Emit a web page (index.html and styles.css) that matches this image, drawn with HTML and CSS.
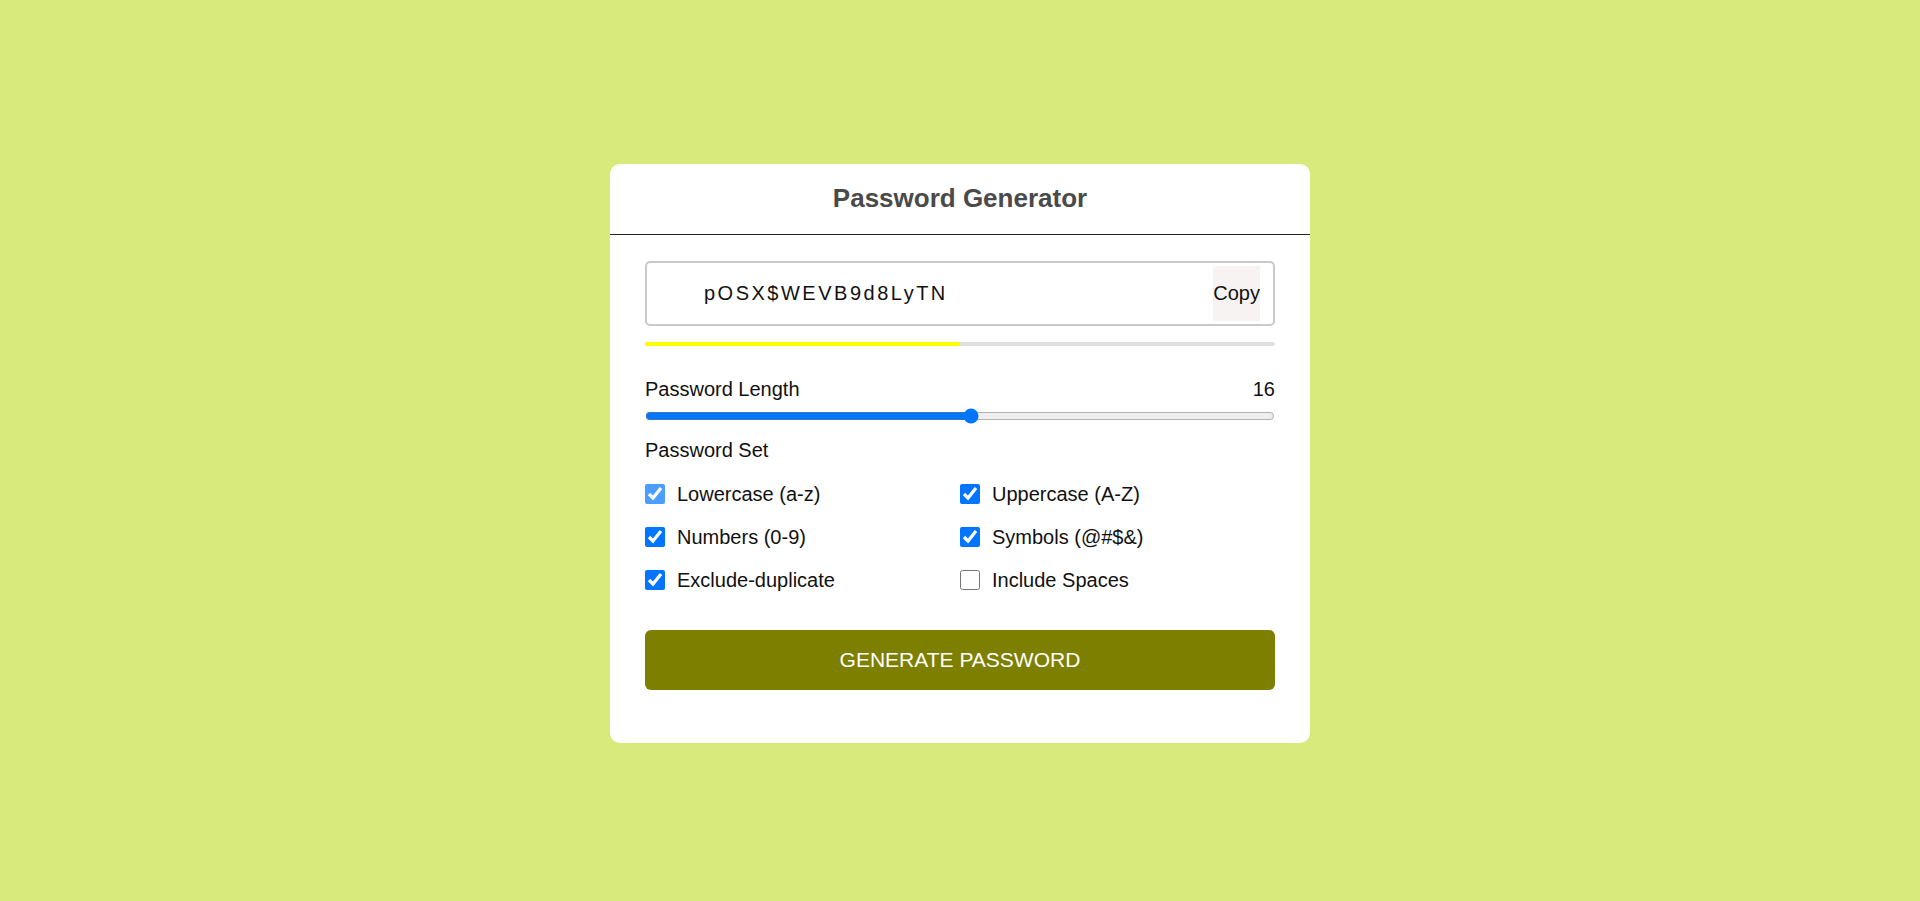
FILE: index.html
```html
<!DOCTYPE html>
<html lang="en">
<head>
<meta charset="utf-8">
<title>Password Generator</title>
<link rel="stylesheet" href="styles.css">
</head>
<body>
<main class="card">
  <header class="card-header">
    <h1 class="title">Password Generator</h1>
  </header>
  <section class="card-body">
    <div class="display">
      <span class="pass">pOSX$WEVB9d8LyTN</span>
      <button class="copy" type="button">Copy</button>
    </div>
    <div class="strength"><div class="strength-fill" style="width:50%"></div></div>
    <div class="length-row">
      <span>Password Length</span>
      <span>16</span>
    </div>
    <input class="slider" type="range" min="1" max="30" value="16">
    <div class="set-label">Password Set</div>
    <div class="options">
      <label class="opt"><input class="dim" type="checkbox" checked><span>Lowercase (a-z)</span></label>
      <label class="opt"><input type="checkbox" checked><span>Uppercase (A-Z)</span></label>
      <label class="opt"><input type="checkbox" checked><span>Numbers (0-9)</span></label>
      <label class="opt"><input type="checkbox" checked><span>Symbols (@#$&amp;)</span></label>
      <label class="opt"><input type="checkbox" checked><span>Exclude-duplicate</span></label>
      <label class="opt"><input type="checkbox"><span>Include Spaces</span></label>
    </div>
    <button class="generate" type="button">GENERATE PASSWORD</button>
  </section>
</main>
</body>
</html>
```
FILE: styles.css
```css
* { box-sizing: border-box; }
html, body { margin: 0; padding: 0; }
body {
  background: #d8ea7c;
  font-family: "Liberation Sans", Arial, sans-serif;
  color: #111;
  min-height: 100vh;
  display: flex;
  align-items: center;
  justify-content: center;
  padding-top: 5px;
}
.card {
  width: 700px;
  background: #fff;
  border-radius: 10px;
}
.card-header {
  height: 71px;
  border-bottom: 1px solid #222;
  display: flex;
  align-items: center;
  justify-content: center;
}
.title {
  margin: 0;
  font-size: 26px;
  font-weight: bold;
  color: #4a4a4a;
}
.card-body {
  padding: 26px 35px 53px;
  display: flex;
  flex-direction: column;
}
.display {
  height: 65px;
  border: 2px solid #c9c9c9;
  border-radius: 5px;
  display: flex;
  align-items: center;
  padding: 0 13px 0 57px;
}
.pass {
  font-size: 20px;
  letter-spacing: 2.5px;
  color: #111;
}
.copy {
  margin-left: auto;
  height: 55px;
  padding: 0;
  border: none;
  background: #f7f3f3;
  font-family: "Liberation Sans", Arial, sans-serif;
  font-size: 20px;
  color: #111;
}
.strength {
  margin-top: 16px;
  height: 4px;
  background: #dedede;
  border-radius: 2px;
  overflow: hidden;
}
.strength-fill {
  height: 100%;
  background: #ffff00;
}
.length-row {
  margin-top: 31px;
  display: flex;
  justify-content: space-between;
  font-size: 20px;
  line-height: 24px;
}
.slider {
  margin: 7px 0 0;
  width: 100%;
  height: 16px;
}
.set-label {
  margin-top: 14px;
  font-size: 20px;
  line-height: 24px;
}
.options {
  margin-top: 20px;
  display: grid;
  grid-template-columns: 1fr 1fr;
  row-gap: 19px;
}
.opt {
  display: flex;
  align-items: center;
  gap: 12px;
  font-size: 20px;
  line-height: 24px;
}
.opt input {
  margin: 0;
  width: 20px;
  height: 20px;
}
.opt input.dim {
  opacity: 0.7;
}
.generate {
  margin-top: 38px;
  height: 60px;
  border: none;
  border-radius: 6px;
  background: #7d7f00;
  color: #fff;
  font-family: "Liberation Sans", Arial, sans-serif;
  font-size: 21px;
}
```
